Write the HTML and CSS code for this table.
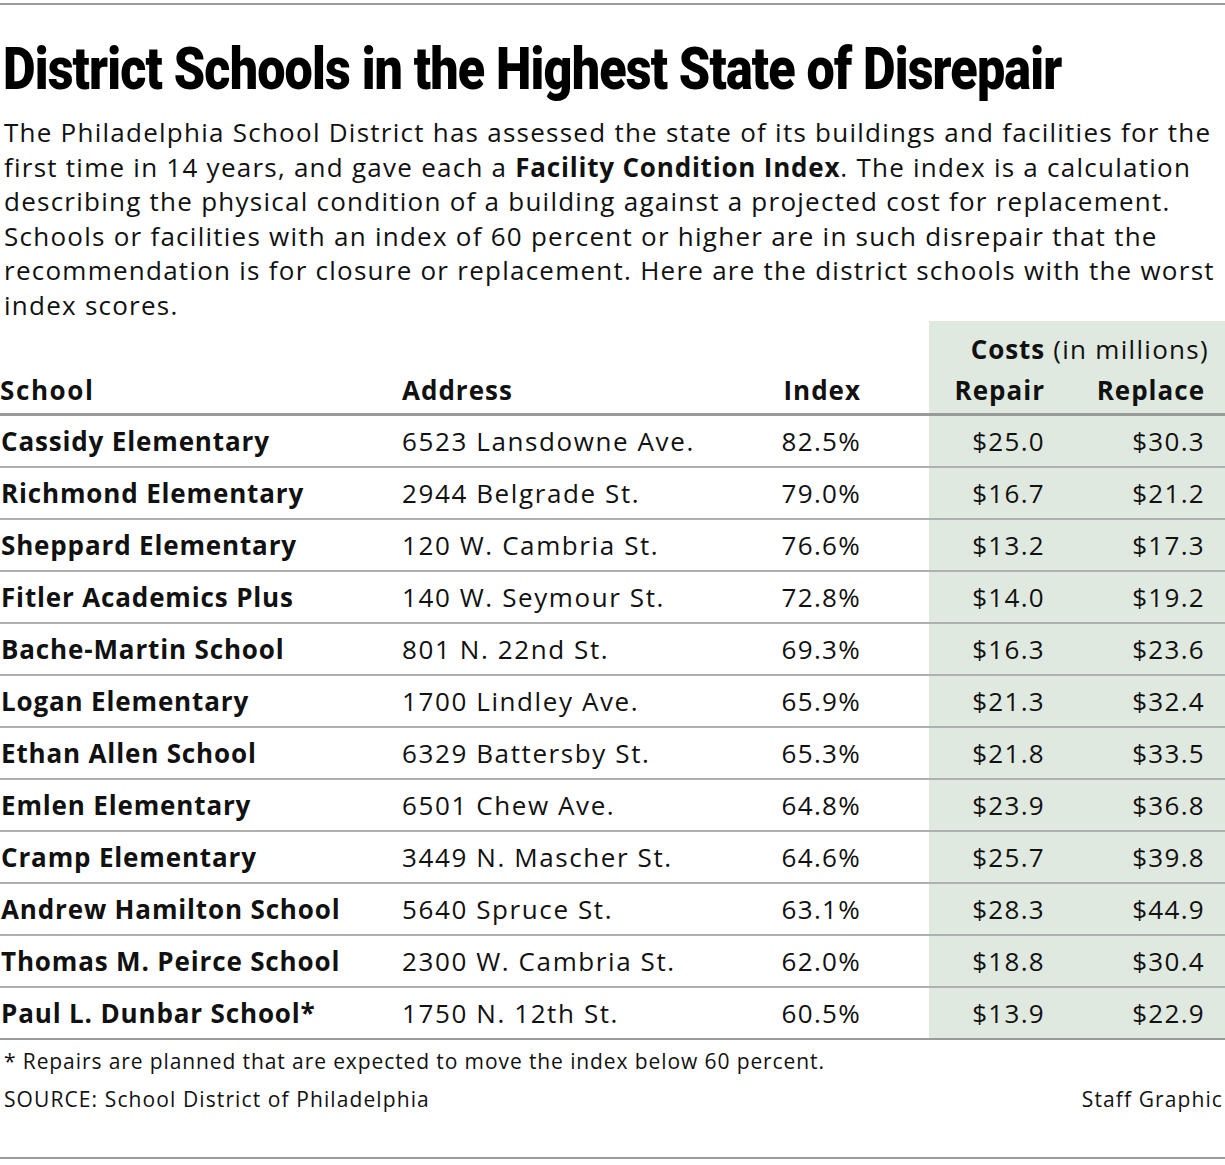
FILE: index.html
```html
<!DOCTYPE html>
<html>
<head>
<meta charset="utf-8">
<link rel="stylesheet" href="styles.css">
</head>
<body>
<div class="page">
  <div class="rule top"></div>
  <h1 class="title"><span class="title-text">District Schools in the Highest State of Disrepair</span></h1>
  <p class="intro">The Philadelphia School District has assessed the state of its buildings and facilities for the<br>first time in 14 years, and gave each a <b>Facility Condition Index</b>. The index is a calculation<br>describing the physical condition of a building against a projected cost for replacement.<br>Schools or facilities with an index of 60 percent or higher are in such disrepair that the<br>recommendation is for closure or replacement. Here are the district schools with the worst<br>index scores.</p>
  <table class="data">
    <colgroup>
      <col class="c-school"><col class="c-addr"><col class="c-index"><col class="c-repair"><col class="c-replace">
    </colgroup>
    <thead>
      <tr class="h1">
        <th></th><th></th><th></th>
        <th class="costs" colspan="2"><b>Costs</b> (in millions)</th>
      </tr>
      <tr class="h2">
        <th class="l">School</th><th class="l">Address</th><th class="r idx">Index</th><th class="r g rep">Repair</th><th class="r g rpl">Replace</th>
      </tr>
    </thead>
    <tbody>
      <tr><td class="name">Cassidy Elementary</td><td class="addr">6523 Lansdowne Ave.</td><td class="r idx">82.5%</td><td class="r g rep">$25.0</td><td class="r g rpl">$30.3</td></tr>
      <tr><td class="name">Richmond Elementary</td><td class="addr">2944 Belgrade St.</td><td class="r idx">79.0%</td><td class="r g rep">$16.7</td><td class="r g rpl">$21.2</td></tr>
      <tr><td class="name">Sheppard Elementary</td><td class="addr">120 W. Cambria St.</td><td class="r idx">76.6%</td><td class="r g rep">$13.2</td><td class="r g rpl">$17.3</td></tr>
      <tr><td class="name">Fitler Academics Plus</td><td class="addr">140 W. Seymour St.</td><td class="r idx">72.8%</td><td class="r g rep">$14.0</td><td class="r g rpl">$19.2</td></tr>
      <tr><td class="name">Bache-Martin School</td><td class="addr">801 N. 22nd St.</td><td class="r idx">69.3%</td><td class="r g rep">$16.3</td><td class="r g rpl">$23.6</td></tr>
      <tr><td class="name">Logan Elementary</td><td class="addr">1700 Lindley Ave.</td><td class="r idx">65.9%</td><td class="r g rep">$21.3</td><td class="r g rpl">$32.4</td></tr>
      <tr><td class="name">Ethan Allen School</td><td class="addr">6329 Battersby St.</td><td class="r idx">65.3%</td><td class="r g rep">$21.8</td><td class="r g rpl">$33.5</td></tr>
      <tr><td class="name">Emlen Elementary</td><td class="addr">6501 Chew Ave.</td><td class="r idx">64.8%</td><td class="r g rep">$23.9</td><td class="r g rpl">$36.8</td></tr>
      <tr><td class="name">Cramp Elementary</td><td class="addr">3449 N. Mascher St.</td><td class="r idx">64.6%</td><td class="r g rep">$25.7</td><td class="r g rpl">$39.8</td></tr>
      <tr><td class="name">Andrew Hamilton School</td><td class="addr">5640 Spruce St.</td><td class="r idx">63.1%</td><td class="r g rep">$28.3</td><td class="r g rpl">$44.9</td></tr>
      <tr><td class="name">Thomas M. Peirce School</td><td class="addr">2300 W. Cambria St.</td><td class="r idx">62.0%</td><td class="r g rep">$18.8</td><td class="r g rpl">$30.4</td></tr>
      <tr class="last"><td class="name">Paul L. Dunbar School*</td><td class="addr">1750 N. 12th St.</td><td class="r idx">60.5%</td><td class="r g rep">$13.9</td><td class="r g rpl">$22.9</td></tr>
    </tbody>
  </table>
  <p class="note">* Repairs are planned that are expected to move the index below 60 percent.</p>
  <div class="credits">
    <span>SOURCE: School District of Philadelphia</span>
    <span>Staff Graphic</span>
  </div>
  <div class="rule bottom"></div>
</div>
</body>
</html>
```
FILE: styles.css
```css
* { box-sizing: border-box; }
html, body { margin: 0; padding: 0; background: #fff; }
body { font-family: "Open Sans", "Noto Sans", sans-serif; color: #111; }
.page {
  width: 1225px;
  height: 1165px;
  padding: 3px 0 6px;
  display: flex;
  flex-direction: column;
}
.rule { height: 2px; background: #9a9a9a; flex: none; }
.rule.bottom { margin-top: auto; }
.title {
  margin: 0;
  padding: 34px 0 0 3px;
  height: 110px;
  font-family: "Roboto", "Liberation Sans", sans-serif;
  font-weight: 900;
  font-size: 60px;
  line-height: 60px;
  color: #000;
  white-space: nowrap;
}
.title-text { display: inline-block; transform: scaleX(0.838); transform-origin: left center; letter-spacing: -1px; }
.intro {
  margin: 0;
  padding: 0 0 0 4px;
  font-size: 26px;
  line-height: 34.6px;
  font-weight: 400;
  letter-spacing: 1.25px;
  white-space: nowrap;
}
.intro b { font-weight: 700; letter-spacing: 0.8px; }
.data { border-collapse: collapse; width: 1225px; margin-top: -2px; font-size: 26px; letter-spacing: 1.3px; }
.c-school { width: 402px; }
.c-addr { width: 358px; }
.c-index { width: 169px; }
.c-repair { width: 135px; }
.c-replace { width: 161px; }
th, td { padding: 0; text-align: left; white-space: nowrap; }
th { font-weight: 700; letter-spacing: 1px; }
.h2 th:first-child { letter-spacing: 1.6px; }
.h1 th { height: 46px; vertical-align: bottom; }
.h1 .costs { background: #e0e9df; text-align: right; padding-right: 16px; font-weight: 400; letter-spacing: 1.3px; }
.h1 .costs b { font-weight: 700; letter-spacing: 0.9px; }
.h2 th { height: 48px; vertical-align: middle; border-bottom: 3px solid #9a9a9a; }
td { height: 52px; border-bottom: 2px solid #b0b0b0; vertical-align: middle; }
tr.last td { border-bottom-color: #9a9a9a; }
.name { font-weight: 700; padding-left: 1px; letter-spacing: 0.85px; }
.addr { letter-spacing: 1.6px; }
.r { text-align: right; }
.g { background: #e0e9df; }
.idx { padding-right: 68px; }
.rep { padding-right: 19px; }
.rpl { padding-right: 20px; }
.note { margin: 0; padding: 8px 0 0 4px; font-size: 21px; line-height: 26px; letter-spacing: 0.9px; }
.credits { display: flex; justify-content: space-between; padding: 12px 2px 0 4px; font-size: 21px; line-height: 26px; letter-spacing: 1.1px; }
```
